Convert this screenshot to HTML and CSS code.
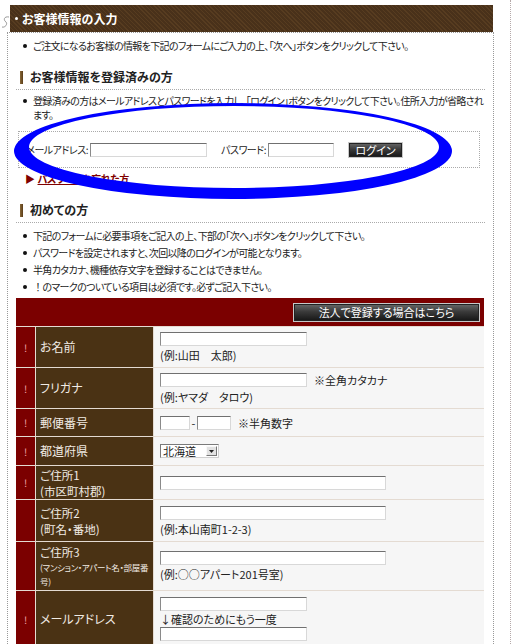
FILE: index.html
```html
<!DOCTYPE html>
<html lang="ja">
<head>
<meta charset="utf-8">
<title>お客様情報の入力</title>
<link rel="stylesheet" href="styles.css">
</head>
<body>
<div class="page">
  <svg class="curl" width="10" height="16" viewBox="0 0 10 16"><path d="M8 2 C3 1 2 5 5 7 C7 9 4 13 1 12" fill="none" stroke="#9a9a9a" stroke-width="1"/></svg>
  <div class="wrap">
    <div class="header"><span class="hdot"></span>お客様情報の入力</div>
    <div class="box">
      <ul class="bullets intro">
        <li>ご注文になるお客様の情報を下記のフォームにご入力の上、「次へ」ボタンをクリックして下さい。</li>
      </ul>
      <h2 class="sec">お客様情報を登録済みの方</h2>
      <ul class="bullets member">
        <li>登録済みの方はメールアドレスとパスワードを入力し、「ログイン」ボタンをクリックして下さい。住所入力が省略され<br>ます。</li>
      </ul>
      <div class="login">
        <span class="lbl mail">メールアドレス:</span><span class="inp w117"></span>
        <span class="lbl pw">パスワード:</span><span class="inp w66"></span>
        <span class="btn login-btn">ログイン</span>
      </div>
      <div class="forgot"><span class="tri">▶</span><span class="flink">パスワードを忘れた方</span></div>
      <h2 class="sec sec2">初めての方</h2>
      <ul class="bullets first">
        <li>下記のフォームに必要事項をご記入の上、下部の「次へ」ボタンをクリックして下さい。</li>
        <li>パスワードを設定されますと、次回以降のログインが可能となります。</li>
        <li>半角カタカナ、機種依存文字を登録することはできません。</li>
        <li><span class="full">！</span>のマークのついている項目は必須です。必ずご記入下さい。</li>
      </ul>
      <div class="form">
        <div class="bar"><span class="btn corp-btn">法人で登録する場合はこちら</span></div>

        <div class="req">!</div>
        <div class="label">お名前</div>
        <div class="val"><span class="inp w147"></span><span class="ex">(例:山田　太郎)</span></div>

        <div class="req">!</div>
        <div class="label">フリガナ</div>
        <div class="val"><span class="line"><span class="inp w147"></span><span class="note">※全角カタカナ</span></span><span class="ex">(例:ヤマダ　タロウ)</span></div>

        <div class="req">!</div>
        <div class="label">郵便番号</div>
        <div class="val"><span class="line"><span class="inp w30"></span><span class="dash">-</span><span class="inp w34"></span><span class="note">※半角数字</span></span></div>

        <div class="req">!</div>
        <div class="label">都道府県</div>
        <div class="val"><span class="sel"><span class="seltxt">北海道</span><span class="selbtn"><svg width="7" height="5" viewBox="0 0 7 5"><path d="M1 1h5L3.5 4z" fill="#222"/></svg></span></span></div>

        <div class="req">!</div>
        <div class="label"><span class="ln">ご住所1</span><span class="ln">(市区町村郡)</span></div>
        <div class="val"><span class="inp w226"></span></div>

        <div class="req"></div>
        <div class="label"><span class="ln">ご住所2</span><span class="ln">(町名・番地)</span></div>
        <div class="val"><span class="inp w226"></span><span class="ex">(例:本山南町1-2-3)</span></div>

        <div class="req"></div>
        <div class="label"><span class="ln">ご住所3</span><span class="small">(マンション・アパート名・部屋番号)</span></div>
        <div class="val"><span class="inp w226"></span><span class="ex">(例:○○アパート201号室)</span></div>

        <div class="req">!</div>
        <div class="label">メールアドレス</div>
        <div class="val top"><span class="inp w147"></span><span class="ex">↓確認のためにもう一度</span><span class="inp w147"></span></div>
      </div>
    </div>
  </div>
  <svg class="ellipse" width="512" height="644" viewBox="0 0 512 644">
    <path fill="#0000ff" fill-rule="evenodd" d="M14 151 A219 48 0 1 0 452 151 A219 48 0 1 0 14 151 Z M29 147 A205 41 0 1 1 439 147 A205 41 0 1 1 29 147 Z"/>
  </svg>
</div>
</body>
</html>
```
FILE: styles.css
```css
html, body {
  margin: 0;
  padding: 0;
  background: #ffffff;
}
body {
  font-family: "Noto Sans CJK JP", "Noto Sans", sans-serif;
  font-size: 10px;
  color: #222;
  font-feature-settings: "palt";
}
.page {
  position: relative;
  width: 512px;
  height: 644px;
  overflow: hidden;
}
.curl {
  position: absolute;
  left: 1px;
  top: 15px;
}
.wrap {
  width: 511px;
  height: 644px;
  box-sizing: border-box;
  padding: 5px 0 0 7px;
  border-right: 1px dotted #b5a9a9;
}
.header {
  margin-left: 3px;
  width: 483px;
  height: 27px;
  box-sizing: border-box;
  display: flex;
  align-items: center;
  padding-left: 5px;
  color: #ffffff;
  font-weight: bold;
  font-size: 12px;
  background-color: #4d341b;
  background-image: repeating-linear-gradient(45deg, #573c20 0 1px, #49311a 1px 3px);
}
.hdot {
  width: 3px;
  height: 3px;
  border-radius: 50%;
  background: #ffffff;
  margin-right: 4px;
}
.box {
  width: 487px;
  height: 612px;
  box-sizing: border-box;
  border: 1px dotted #999;
  border-bottom: none;
  padding: 0 8px 0 8px;
}
.bullets {
  list-style: none;
  margin: 0;
  padding: 0;
  letter-spacing: -0.65px;
}
.bullets li {
  position: relative;
  padding-left: 17px;
  padding-right: 0;
  line-height: 14px;
}
.bullets li::before {
  content: "";
  position: absolute;
  left: 7px;
  top: 5px;
  width: 4px;
  height: 4px;
  border-radius: 50%;
  background: #111;
}
.full {
  font-feature-settings: normal;
}
.intro {
  margin-top: 6px;
}
.sec {
  margin: 15px 0 0 0;
  height: 21px;
  line-height: 18px;
  font-size: 12px;
  font-weight: bold;
  color: #222;
  border-bottom: 1px dotted #aaa;
  display: flex;
  align-items: flex-start;
  padding-left: 4px;
}
.sec::before {
  content: "";
  width: 3px;
  height: 13px;
  margin-top: 3px;
  margin-right: 7px;
  background: linear-gradient(to right, #8a6a3a, #5a3c18);
}
.member {
  margin-top: 4px;
}
.login {
  margin-top: 9px;
  margin-left: 2px;
  width: 462px;
  height: 37px;
  box-sizing: border-box;
  border: 1px dotted #aaa;
  display: flex;
  align-items: center;
  padding-left: 4px;
  letter-spacing: -0.5px;
}
.lbl {
  text-align: right;
  margin-right: 2px;
  white-space: nowrap;
}
.lbl.mail {
  width: 65px;
}
.lbl.pw {
  width: 46px;
  margin-left: 13px;
}
.inp {
  display: block;
  height: 14px;
  box-sizing: border-box;
  background: #fff;
  border-top: 1px solid #707070;
  border-left: 1px solid #8a8a8a;
  border-right: 1px solid #d8d8d8;
  border-bottom: 1px solid #d8d8d8;
}
.w117 { width: 117px; }
.w66 { width: 66px; }
.w147 { width: 147px; }
.w226 { width: 226px; }
.w30 { width: 30px; }
.w34 { width: 34px; }
.btn {
  display: flex;
  align-items: center;
  justify-content: center;
  box-sizing: border-box;
  color: #ffffff;
  background: linear-gradient(to bottom, #6a6a6a 0%, #3a3a3a 45%, #151515 100%);
  border: 1px solid #c8c8c8;
  box-shadow: inset 0 0 0 1px #222;
  letter-spacing: 0;
}
.login-btn {
  margin-left: 14px;
  width: 55px;
  height: 16px;
  font-size: 11px;
}
.forgot {
  margin-top: 4px;
  margin-left: 9px;
  line-height: 14px;
  color: #800000;
  font-weight: bold;
  display: flex;
  align-items: center;
  letter-spacing: -0.5px;
}
.tri {
  font-size: 10px;
  margin-right: 3px;
}
.flink {
  text-decoration: underline;
}
.sec2 {
  margin-top: 15px;
}
.first {
  margin-top: 4px;
}
.first li {
  line-height: 17px;
}
.first li::before {
  top: 7px;
}
.form {
  margin-top: 3px;
  width: 468px;
  display: grid;
  grid-template-columns: 19px 117px 330px;
  grid-template-rows: 28px 40px 40px 27px 28px 33px 41px 48px 56px;
  gap: 1px;
  background: #e4dbd2;
  font-size: 11px;
}
.bar {
  grid-column: 1 / 4;
  background: #7b0000;
  display: flex;
  align-items: center;
  justify-content: flex-end;
  padding-right: 4px;
}
.corp-btn {
  width: 187px;
  height: 19px;
  font-size: 11px;
}
.req {
  background: #7b0000;
  color: #f3a9a9;
  display: flex;
  align-items: center;
  justify-content: center;
  font-size: 10px;
}
.label {
  background: #4a3214;
  color: #f1ebe4;
  font-size: 12px;
  line-height: 16px;
  padding-left: 4px;
  display: flex;
  flex-direction: column;
  justify-content: center;
}
.label .ln {
  display: block;
  font-size: 11.5px;
  line-height: 16px;
}
.label .small {
  display: block;
  font-size: 8.5px;
  line-height: 14px;
  letter-spacing: -0.3px;
}
.val {
  background: #f6f6f6;
  padding-left: 6px;
  display: flex;
  flex-direction: column;
  justify-content: center;
  align-items: flex-start;
}
.val.top {
  justify-content: flex-start;
  padding-top: 6px;
}
.ex {
  line-height: 14px;
  margin-top: 2px;
}
.val.top .ex {
  margin-top: 1px;
  margin-bottom: 1px;
}
.line {
  display: flex;
  align-items: center;
}
.note {
  margin-left: 7px;
  font-size: 11px;
}
.dash {
  width: 7px;
  text-align: center;
  line-height: 14px;
}
.sel {
  display: flex;
  align-items: center;
  width: 59px;
  height: 14px;
  box-sizing: border-box;
  background: #fff;
  border: 1px solid #7a7a7a;
  border-right-color: #cfcfcf;
  border-bottom-color: #cfcfcf;
}
.seltxt {
  flex: 1;
  padding-left: 2px;
  line-height: 12px;
}
.selbtn {
  width: 11px;
  height: 10px;
  margin-right: 1px;
  background: #e2e2e2;
  border: 1px solid #f8f8f8;
  border-right-color: #777;
  border-bottom-color: #777;
  box-sizing: border-box;
  display: flex;
  align-items: center;
  justify-content: center;
}
.ellipse {
  position: absolute;
  left: 0;
  top: 0;
  pointer-events: none;
}
```
